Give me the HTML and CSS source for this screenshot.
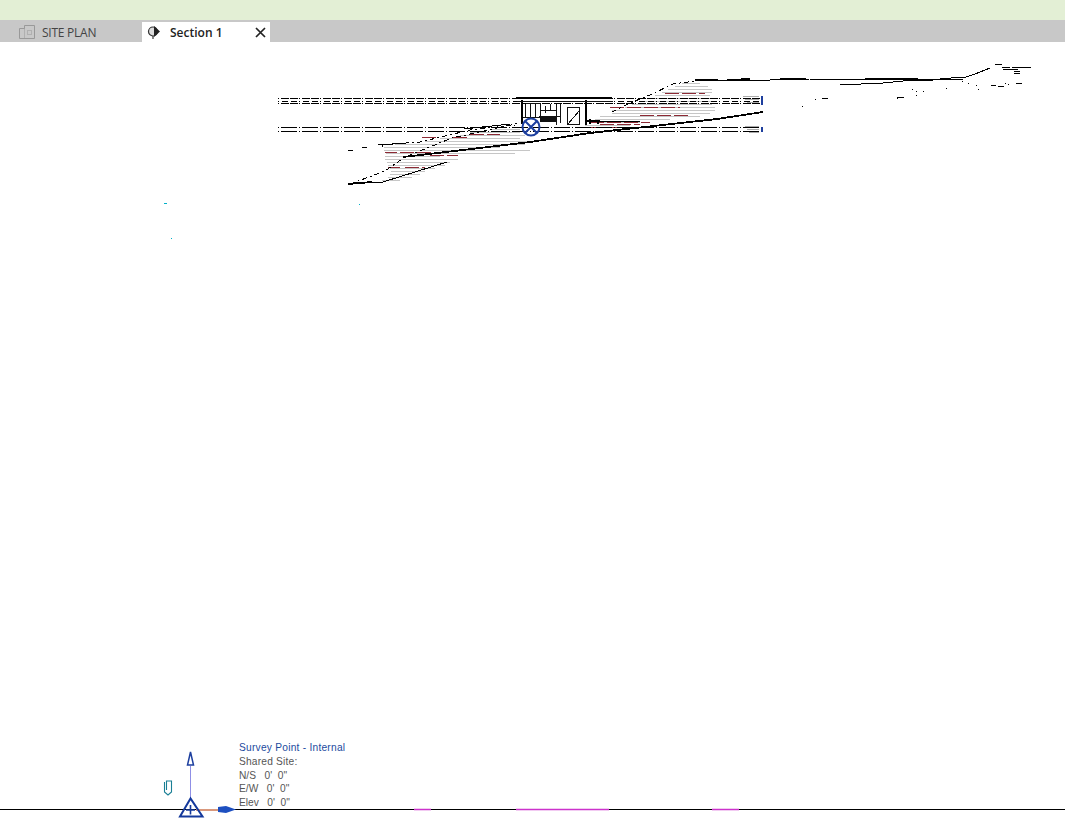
FILE: index.html
```html
<!DOCTYPE html>
<html lang="en">
<head>
<meta charset="utf-8">
<title>Section 1</title>
<link rel="stylesheet" href="styles.css">
</head>
<body>
<div class="app">
  <div class="ribbon"></div>
  <div class="tabs">
    <div class="tab">
      <svg class="tab-icon" width="16" height="14" viewBox="0 0 16 14">
        <path class="ic-grey" d="M.5 3.500h5v-3h10v13H.5z"/>
        <path class="ic-dots" d="M5.500 3.500v10M8.500 5.500h4v4h-4z"/>
      </svg>
      <span class="tab-label">SITE PLAN</span>
    </div>
    <div class="tab tab-active">
      <svg class="tab-icon-sec" width="14" height="14" viewBox="0 0 14 14">
        <circle class="ic-dark" cx="6" cy="6.500" r="4.500"/>
        <path class="ic-fill" d="M7 1l6 5.500-6 5.500z"/>
        <path class="ic-dark" d="M6 11v3"/>
      </svg>
      <span class="tab-label-active">Section 1</span>
      <svg class="tab-close" width="11" height="11" viewBox="0 0 11 11">
        <path class="ic-close" d="M1 1l9 9M10 1l-9 9"/>
      </svg>
    </div>
  </div>
  <main class="canvas">
    <svg class="drawing" width="1065" height="794" viewBox="0 42 1065 794">
      <!-- hatching -->
      <path class="hatch" d="M384 147H500M384 150H530M386 153H515M385 156H440M385 159H458M387 162H450M388 165H445M390 168H435M391 171H425M390 174H420M388 177H412M382 180H400M395 144H525M425 141H530M440 138H520M460 135H525M470 132H520M490 129H520M612 113H710M612 110H715M625 107H715M632 104H712M640 101H715M648 98H715M655 95H710M662 92H712M668 89H712M675 86H708M682 83H700M600 116H700M595 119H670M590 122H640M585 125H630"/>
      <path class="hatch-red" d="M385 152H397M400 152H445M430 155H458M388 167H400M405 167H425M422 137H438M453 137H470M470 134H500M590 122H650M600 124H640M610 107H680M665 93H705M640 115H690M587 127H630"/>

      <!-- section-head datum lines -->
      <path class="datum-upper" d="M278 98.500H763M278 103.500H763"/>
      <path class="datum-mid" d="M278 101.500H763"/>
      <path class="datum" d="M278 127.500H763M278 131.500H763"/>
      <path class="tail" d="M743 96h16M745 99h14M747 102h12M745 126h14M747 129h12M749 132h10"/>
      <path class="tick" d="M762 96v9M762 127v5"/>

      <!-- terrain -->
      <path class="ground" d="M403 157L463 150L530 142L590 133L717 119L763 112"/>
      <path class="ground-thin" d="M348 184L383 182L447 162"/>
      <path class="ground" d="M348 184L372 182"/>
      <path class="broken" d="M350 184L385 171L405 157L452 138L520 123"/>
      <path class="broken" d="M348 150H353M362 147H368M378 145L420 142L470 130L515 125"/>
      <path class="ground-thin" d="M382 147V145L405 143M464 129L510 124M590 121H640"/>
      <path class="broken" d="M612 112L630 103L650 95L673 84L695 81"/>
      <path class="ground" d="M695 80H718M727 80L750 79"/>
      <path class="ground-thin" d="M718 80H770L810 79H940L963 77"/>
      <path class="ground" d="M780 79H806M865 79H918"/>
      <path class="ground-thin" d="M840 85L883 83L903 81L963 79"/>
      <path class="ground-thin" d="M963 78L975 74L990 68"/>
      <path class="ground-thin" d="M995 64H1002M1002 67H1010M1003 69H1018M1012 67H1031M1014 71H1020M1014 73H1020"/>
      <path class="specks" d="M815 99h1M822 98h6M802 106h1M897 97h7M897 98h1M912 89h1M916 91h1M923 91h1M916 95h1M946 88h1M962 81h1M968 83h1M976 85h1M978 89h1M991 85h5M998 86h6M1005 83h1M1008 84h1M1016 83h6"/>

      <!-- building -->
      <path class="bldg-heavy" d="M516 98H612M522 100V124M586 100V125"/>
      <path class="bldg" d="M516 101H612M525 103V116M530 103V116M535 103V116M540 103V116M525 103H540M540 110H555M545 105V112M550 103V110M538 116H560M556 103V124M560 103V122M567 107H579V124H567ZM567 124L579 110M522 117H540"/>
      <rect class="bldg-fill" x="540" y="117" width="16" height="5"/>
      <path class="bldg-heavy" d="M586 121H600M590 119V124M598 120V124"/>

      <!-- section marker -->
      <circle class="marker" cx="531" cy="127" r="8.500"/>
      <path class="marker" d="M525 121L537 133M537 121L525 133"/>

      <!-- reference line -->
      <path class="baseline" d="M0 809.500H1065"/>
      <path class="pink" d="M414 809.500H431M516 809.500H609M712 809.500H739"/>

      <!-- cyan specks -->
      <path class="cyan" d="M164 203h3M359 204h1M171 238h1"/>

      <!-- survey point -->
      <path class="axis-y" d="M190.500 766V798"/>
      <path class="axis-x" d="M196 809.500H219"/>
      <path class="arrow-y" d="M190.500 752L187.500 765H193.500Z"/>
      <path class="arrow-x" d="M218 807L226 806L236 809.500L226 813L218 812Z"/>
      <path class="tri" d="M190.500 798.500L180 816.500H202.500Z"/>
      <path class="plus" d="M190.500 805V814.500M186 810H195"/>
      <path class="clip" d="M164.500 782V792L168 795L171.500 792V781H166.500V790"/>
    </svg>
    <div class="survey">
      <div class="survey-title">Survey Point - Internal</div>
      <div class="survey-row">Shared Site:</div>
      <div>N/S &nbsp; 0' &nbsp;0"</div>
      <div>E/W &nbsp; 0' &nbsp;0"</div>
      <div>Elev &nbsp; 0' &nbsp;0"</div>
    </div>
  </main>
</div>
</body>
</html>
```
FILE: styles.css
```css
html, body { margin: 0; padding: 0; background: #fff; }
.app { display: flex; flex-direction: column; width: 1065px; height: 836px; overflow: hidden; }
.ribbon { height: 20px; background: #e3efd5; flex: none; }
.tabs { height: 22px; background: #c8c8c8; display: flex; align-items: flex-end; flex: none; font-family: "Open Sans", sans-serif; font-size: 12px; }
.tab { width: 142px; height: 20px; display: flex; align-items: center; padding-left: 19px; box-sizing: border-box; color: #444; }
.tab-icon { margin-right: 7px; flex: none; }
.tab-label { letter-spacing: -.25px; }
.tab-active { width: 128px; background: #fff; padding-left: 5px; color: #222; }
.tab-icon-sec { margin-right: 9px; flex: none; }
.tab-label-active { font-weight: 600; width: 85px; flex: none; letter-spacing: 0; }
.tab-close { flex: none; }
.ic-grey { fill: none; stroke: #999; stroke-width: 1; }
.ic-dots { fill: none; stroke: #999; stroke-width: 1; stroke-dasharray: 1 1; }
.ic-dark { fill: #dcdcdc; stroke: #333; stroke-width: 1.200; }
.ic-fill { fill: #222; }
.ic-close { fill: none; stroke: #222; stroke-width: 1.700; }

.canvas { position: relative; flex: 1; background: #fff; }
.drawing { position: absolute; left: 0; top: 0; display: block; shape-rendering: crispEdges; }
.datum { fill: none; stroke: #000; stroke-width: 1; stroke-dasharray: 1 2 16 2; }
.datum-upper { fill: none; stroke: #000; stroke-width: 1; stroke-dasharray: 1 2 8 1 8 1; }
.datum-mid { fill: none; stroke: #000; stroke-width: 1; stroke-dasharray: 1 3 6 3 6 2; }
.tail { fill: none; stroke: #aaa; stroke-width: 1; transform: translateY(.5px); }
.tick { fill: none; stroke: #1e3f9e; stroke-width: 1.500; }
.hatch { fill: none; stroke: #c6c6c6; stroke-width: 1; transform: translateY(.5px); }
.hatch-red { fill: none; stroke: #8d2a35; stroke-width: 1; stroke-dasharray: 14 3; transform: translateY(.5px); }
.ground { fill: none; stroke: #000; stroke-width: 1.800; }
.ground-thin { fill: none; stroke: #000; stroke-width: 1; }
.broken { fill: none; stroke: #000; stroke-width: 1; stroke-dasharray: 5 3 2 3; }
.specks { fill: none; stroke: #000; stroke-width: 1; transform: translateY(.5px); }
.bldg-heavy { fill: none; stroke: #000; stroke-width: 2; }
.bldg { fill: none; stroke: #111; stroke-width: 1; transform: translate(.5px, .5px); }
.bldg-fill { fill: #111; }
.marker { fill: none; stroke: #1d3f9f; stroke-width: 2; shape-rendering: geometricPrecision; }
.baseline { fill: none; stroke: #000; stroke-width: 1; }
.pink { fill: none; stroke: #cc33cc; stroke-width: 1.600; shape-rendering: geometricPrecision; }
.cyan { fill: none; stroke: #00b0c8; stroke-width: 1; transform: translateY(.5px); }
.axis-y { fill: none; stroke: #8f8fe6; stroke-width: 1.500; }
.axis-x { fill: none; stroke: #d9987c; stroke-width: 2; }
.arrow-y { fill: #fff; stroke: #1d3f9f; stroke-width: 1.500; shape-rendering: geometricPrecision; }
.arrow-x { fill: #1d4fc0; shape-rendering: geometricPrecision; }
.tri { fill: none; stroke: #14399c; stroke-width: 2; shape-rendering: geometricPrecision; }
.plus { fill: none; stroke: #14399c; stroke-width: 1.600; shape-rendering: geometricPrecision; }
.clip { fill: none; stroke: #1a7f95; stroke-width: 1.100; shape-rendering: geometricPrecision; }

.survey { position: absolute; left: 239px; top: 699px; font-family: "Liberation Sans", Arial, sans-serif; font-size: 10.200px; line-height: 13.800px; color: #555; }
.survey-title { color: #1c4a9e; letter-spacing: .24px; }
.survey-row { letter-spacing: .2px; }
```
